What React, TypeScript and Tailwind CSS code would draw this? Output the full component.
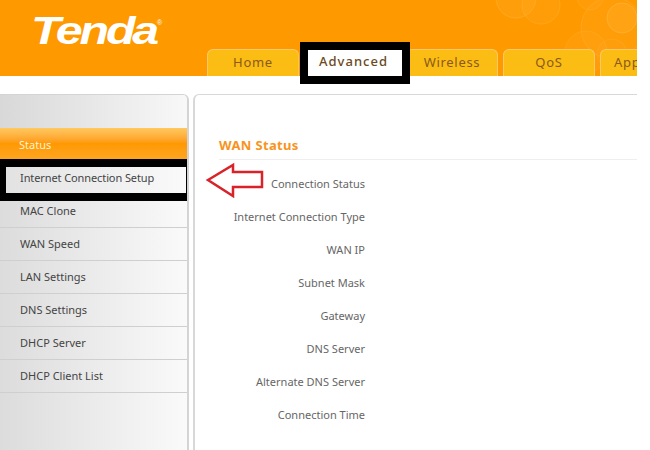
const menu = ["MAC Clone", "WAN Speed", "LAN Settings", "DNS Settings", "DHCP Server", "DHCP Client List"];
const labels = ["Connection Status", "Internet Connection Type", "WAN IP", "Subnet Mask", "Gateway", "DNS Server", "Alternate DNS Server", "Connection Time"];
const bubbles = [
  [516, -2, 20, 0.12], [541, 5, 19, 0.1], [612, 28, 31, 0.1], [622, 18, 15, 0.16], [586, 52, 21, 0.08], [612, 54, 15, 0.06], [590, -3, 13, 0.08],
];

function Tab({ label, left }: { label: string; left?: boolean }) {
  return (
    <div className={`h-[27px] w-[92px] shrink-0 rounded-t-[6px] border border-b-0 border-[#fcc96a] bg-[#fbbd13] text-[13px] leading-[25px] tracking-[0.7px] text-[#8a5a1c] ${left ? "pl-[13px] text-left" : "text-center"}`}>
      {label}
    </div>
  );
}

export default function App() {
  return (
    <div className="h-[450px] w-[650px] overflow-hidden bg-white font-['Noto_Sans',sans-serif]">
      <div className="w-[637px]">
        <header className="relative flex h-[76px] overflow-hidden bg-[#ff9900]">
          <svg className="absolute left-0 top-0" width="637" height="76" viewBox="0 0 637 76" fill="#ffb02e" stroke="#ffbc4d">
            {bubbles.map(([x, y, r, o], i) => (
              <circle key={i} cx={x} cy={y} r={r} fillOpacity={o * 2} strokeOpacity={o * 3} />
            ))}
          </svg>
          <div className="relative ml-[31px] mt-[11px] flex h-[40px] items-start font-['Liberation_Sans',sans-serif] text-[39px] font-bold italic leading-[40px] tracking-[-2.5px] text-white">
            <span className="origin-left scale-x-[1.24]">Tenda</span>
            <span className="ml-[25px] mt-[8px] text-[7px] font-normal not-italic leading-[8px] tracking-normal">®</span>
          </div>
          <nav className="absolute left-[207px] top-[49px] flex w-[430px] gap-[5px] overflow-hidden">
            <Tab label="Home" />
            <div className="h-[27px] w-[97px] shrink-0" />
            <Tab label="Wireless" />
            <Tab label="QoS" />
            <Tab label="App" left />
          </nav>
        </header>
        <div className="absolute left-[300px] top-[42px] z-10 h-[42px] w-[110px] border-[8px] border-black bg-white pr-[3px] text-center text-[13px] font-medium leading-[22px] tracking-[1px] text-[#6b4a22]">
          Advanced
        </div>

        <div className="mt-[18px] flex gap-[4px]">
          <aside className="h-[356px] w-[189px] shrink-0 overflow-hidden rounded-tr-[6px] border-r-2 border-t border-[#d4d4d4] bg-gradient-to-r from-[#dcdcdc] to-[#fafafa]">
            <div className="h-[33px] bg-gradient-to-r from-[#d8d8d8] to-[#f8f8f8]" />
            <div className="flex h-[31px] items-center bg-gradient-to-b from-[#ffc95f] via-[#ff9900] to-[#ffa51f] pl-[19px] pt-[4px] text-[11px] text-[#fff3d6]">
              Status
            </div>
            <div className="relative flex h-[36px] items-center pl-[20px] pt-[2px] text-[11px] tracking-[-0.1px] text-[#444]">
              <span className="relative z-20">Internet Connection Setup</span>
              <div className="absolute left-0 top-0 z-10 h-[42px] w-[194px] border-y-[8px] border-l-[6px] border-r-[8px] border-black bg-gradient-to-r from-[#e2e2e2] to-[#fafafa]" />
            </div>
            {menu.map((m) => (
              <div key={m} className="flex h-[33px] items-center border-b border-[#cfcfcf] pl-[20px] text-[11px] text-[#444]">
                {m}
              </div>
            ))}
          </aside>

          <main className="relative h-[356px] flex-1 rounded-tl-[6px] border-l-2 border-t border-[#d8d8d8] pl-[24px] pt-[41px]">
            <h2 className="border-b border-[#eeeeee] pb-[5px] text-[13px] font-bold leading-[18px] tracking-[0.35px] text-[#f7941d]">WAN Status</h2>
            <svg className="absolute left-[9px] top-[67px] z-20" width="60" height="36" viewBox="0 0 60 36" fill="#fff" stroke="#d8232a" strokeWidth="2.5" strokeLinejoin="miter">
              <path d="M4 18 L29 3 L29 10 L58 10 L58 25 L29 25 L29 34 Z" />
            </svg>
            <dl className="mt-[7px] flex flex-col">
              {labels.map((l) => (
                <dt key={l} className="h-[33px] w-[146px] whitespace-nowrap text-right text-[11px] leading-[33px] text-[#666]">
                  {l}
                </dt>
              ))}
            </dl>
          </main>
        </div>
      </div>
    </div>
  );
}
